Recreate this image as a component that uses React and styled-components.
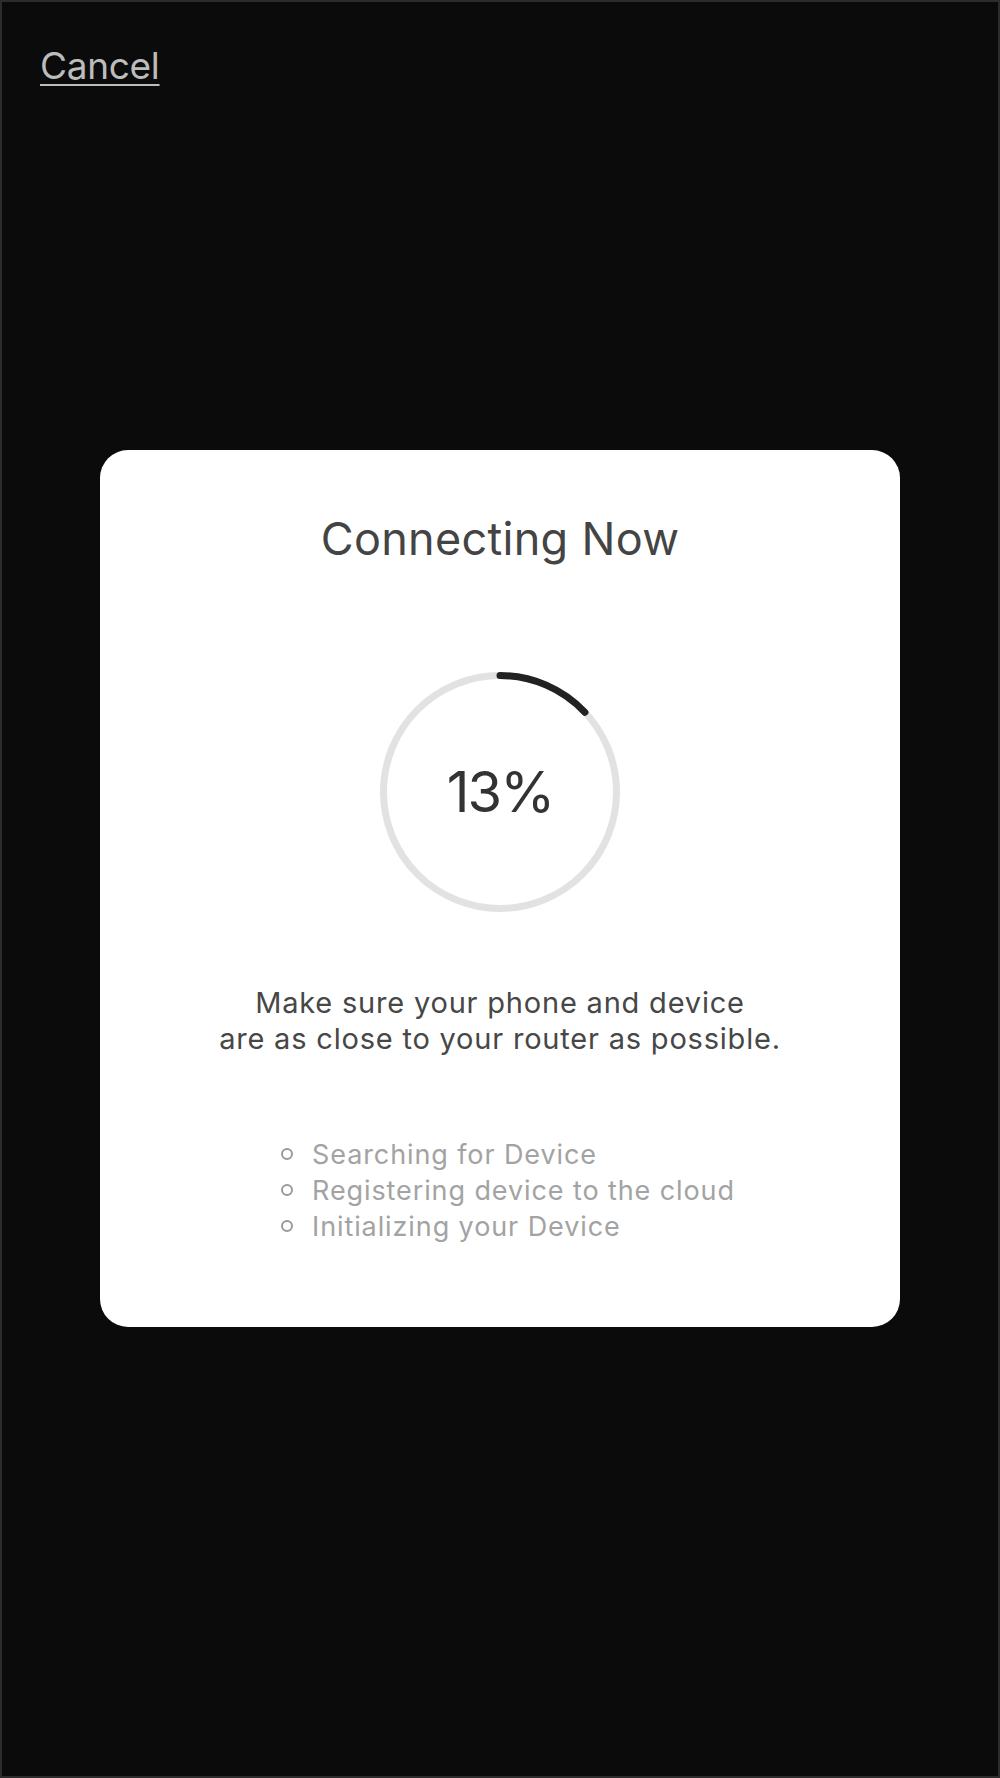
import React from "react";
import styled, { createGlobalStyle } from "styled-components";

const GlobalStyle = createGlobalStyle`
  html, body {
    margin: 0;
    padding: 0;
    background: #0b0b0b;
  }
  body {
    font-family: Inter, "Liberation Sans", Arial, sans-serif;
  }
  * { box-sizing: border-box; }
`;

const Screen = styled.div`
  width: 1000px;
  min-height: 1778px;
  background: #0b0b0b;
  box-shadow: inset 0 0 0 2px #2c2c2c;
  display: flex;
  flex-direction: column;
`;

const Header = styled.header`
  padding: 44px 0 0 40px;
  height: 450px;
`;

const CancelLink = styled.a`
  font-size: 37px;
  line-height: 44px;
  color: #bcbcbc;
  text-decoration: underline;
  text-decoration-thickness: 2px;
  text-underline-offset: 5px;
  letter-spacing: -0.3px;
  cursor: pointer;
`;

const Card = styled.section`
  margin: 0 100px;
  background: #ffffff;
  border-radius: 28px;
  padding: 61px 0 82px;
  display: flex;
  flex-direction: column;
  align-items: center;
`;

const Title = styled.h1`
  margin: 0;
  font-size: 45px;
  line-height: 56px;
  font-weight: 400;
  color: #444444;
  letter-spacing: 0.3px;
`;

const Ring = styled.div`
  position: relative;
  width: 240px;
  height: 240px;
  margin-top: 105px;
  display: flex;
  align-items: center;
  justify-content: center;
`;

const RingSvg = styled.svg`
  position: absolute;
  inset: 0;
`;

const Percent = styled.span`
  position: relative;
  font-size: 56px;
  line-height: 1;
  font-weight: 400;
  color: #333333;
  letter-spacing: -2px;
`;

const Hint = styled.p`
  margin: 73px 0 0;
  font-size: 29px;
  line-height: 36px;
  color: #474747;
  text-align: center;
  letter-spacing: 0.8px;
`;

const Steps = styled.ul`
  list-style: none;
  margin: 80px 0 0;
  padding: 0;
  align-self: flex-start;
  margin-left: 181px;
`;

const Step = styled.li`
  display: flex;
  align-items: center;
  gap: 19px;
  font-size: 27px;
  line-height: 36px;
  color: #a3a3a3;
  letter-spacing: 0.9px;
`;

const Bullet = styled.span`
  width: 12px;
  height: 12px;
  border: 2px solid #9a9a9a;
  border-radius: 50%;
  flex: none;
  transform: translateY(-1px);
`;

const progress = 13;
const R = 116.5;
const C = 2 * Math.PI * R;

export default function App() {
  return (
    <>
      <GlobalStyle />
      <Screen>
        <Header>
          <CancelLink>Cancel</CancelLink>
        </Header>
        <Card>
          <Title>Connecting Now</Title>
          <Ring>
            <RingSvg width="240" height="240" viewBox="0 0 240 240">
              <circle cx="120" cy="120" r={R} fill="none" stroke="#e2e2e2" strokeWidth="7" />
              <circle
                cx="120"
                cy="120"
                r={R}
                fill="none"
                stroke="#222222"
                strokeWidth="7"
                strokeLinecap="round"
                strokeDasharray={`${(C * progress) / 100} ${C}`}
                transform="rotate(-90 120 120)"
              />
            </RingSvg>
            <Percent>{progress}%</Percent>
          </Ring>
          <Hint>
            Make sure your phone and device
            <br />
            are as close to your router as possible.
          </Hint>
          <Steps>
            <Step><Bullet />Searching for Device</Step>
            <Step><Bullet />Registering device to the cloud</Step>
            <Step><Bullet />Initializing your Device</Step>
          </Steps>
        </Card>
      </Screen>
    </>
  );
}
